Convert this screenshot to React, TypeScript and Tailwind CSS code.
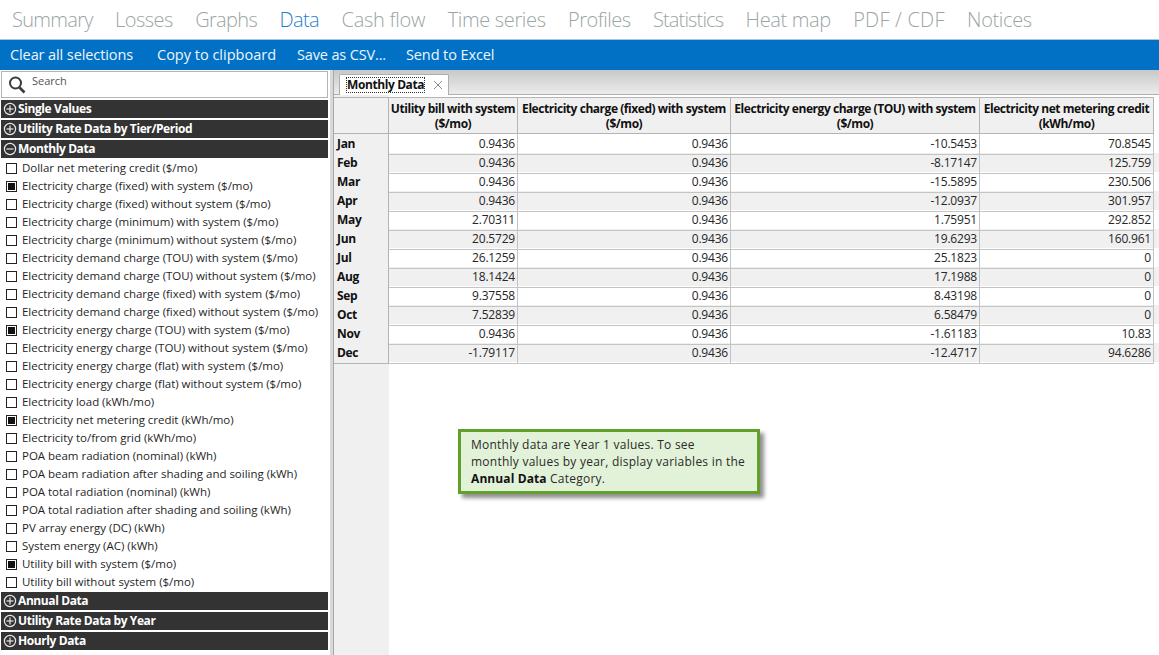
import React from "react";

const tabs: [string, string][] = [
  ["Summary", "tracking-[-0.7px]"],
  ["Losses", "tracking-[-0.55px]"],
  ["Graphs", "tracking-[-0.65px]"],
  ["Data", "tracking-[-0.6px] text-[#1f7fcb]"],
  ["Cash flow", "tracking-[-0.25px]"],
  ["Time series", "tracking-[-0.35px]"],
  ["Profiles", "tracking-[-0.5px]"],
  ["Statistics", "tracking-[-0.85px]"],
  ["Heat map", "tracking-[-0.35px]"],
  ["PDF / CDF", "tracking-[0.2px]"],
  ["Notices", "tracking-[-0.35px]"],
];
const items: [string, boolean][] = [
  ["Dollar net metering credit ($/mo)", false],
  ["Electricity charge (fixed) with system ($/mo)", true],
  ["Electricity charge (fixed) without system ($/mo)", false],
  ["Electricity charge (minimum) with system ($/mo)", false],
  ["Electricity charge (minimum) without system ($/mo)", false],
  ["Electricity demand charge (TOU) with system ($/mo)", false],
  ["Electricity demand charge (TOU) without system ($/mo)", false],
  ["Electricity demand charge (fixed) with system ($/mo)", false],
  ["Electricity demand charge (fixed) without system ($/mo)", false],
  ["Electricity energy charge (TOU) with system ($/mo)", true],
  ["Electricity energy charge (TOU) without system ($/mo)", false],
  ["Electricity energy charge (flat) with system ($/mo)", false],
  ["Electricity energy charge (flat) without system ($/mo)", false],
  ["Electricity load (kWh/mo)", false],
  ["Electricity net metering credit (kWh/mo)", true],
  ["Electricity to/from grid (kWh/mo)", false],
  ["POA beam radiation (nominal) (kWh)", false],
  ["POA beam radiation after shading and soiling (kWh)", false],
  ["POA total radiation (nominal) (kWh)", false],
  ["POA total radiation after shading and soiling (kWh)", false],
  ["PV array energy (DC) (kWh)", false],
  ["System energy (AC) (kWh)", false],
  ["Utility bill with system ($/mo)", true],
  ["Utility bill without system ($/mo)", false],
];
const rows: string[][] = [
  ["Jan", "0.9436", "0.9436", "-10.5453", "70.8545"],
  ["Feb", "0.9436", "0.9436", "-8.17147", "125.759"],
  ["Mar", "0.9436", "0.9436", "-15.5895", "230.506"],
  ["Apr", "0.9436", "0.9436", "-12.0937", "301.957"],
  ["May", "2.70311", "0.9436", "1.75951", "292.852"],
  ["Jun", "20.5729", "0.9436", "19.6293", "160.961"],
  ["Jul", "26.1259", "0.9436", "25.1823", "0"],
  ["Aug", "18.1424", "0.9436", "17.1988", "0"],
  ["Sep", "9.37558", "0.9436", "8.43198", "0"],
  ["Oct", "7.52839", "0.9436", "6.58479", "0"],
  ["Nov", "0.9436", "0.9436", "-1.61183", "10.83"],
  ["Dec", "-1.79117", "0.9436", "-12.4717", "94.6286"],
];
const heads: [string, string][] = [
  ["Utility bill with system", "($/mo)"],
  ["Electricity charge (fixed) with system", "($/mo)"],
  ["Electricity energy charge (TOU) with system", "($/mo)"],
  ["Electricity net metering credit", "(kWh/mo)"],
];

function Sign({ minus }: { minus?: boolean }) {
  return (
    <svg width="14" height="14" viewBox="0 0 14 14" className="shrink-0" fill="none" stroke="#e8e8e8" strokeWidth="1.2">
      <circle cx="7" cy="7" r="5.6" />
      <path d="M3.5 7h7" />
      {!minus && <path d="M7 3.5v7" />}
    </svg>
  );
}

function Header({ label, minus }: { label: string; minus?: boolean }) {
  return (
    <div className="h-[18px] mb-[2px] mx-[1px] w-[327px] bg-[#333333] flex items-center pl-[2px] gap-[1px] text-white font-bold text-[12px] leading-[18px] tracking-[-0.4px]">
      <Sign minus={minus} />
      <span>{label}</span>
    </div>
  );
}

const columns = "grid grid-cols-[55px_129px_213px_249px_174px]";

export default function App() {
  return (
    <div className="w-[1159px] h-[655px] overflow-hidden bg-white flex flex-col font-['Open_Sans',sans-serif] text-[#222]">
      <div className="h-[40px] shrink-0 flex items-center pl-[12px] gap-[22.4px] text-[20px] font-light text-[#9aa5a5] border-b border-[#a9c4dc]">
        {tabs.map(([t, c]) => (
          <span key={t} className={c}>{t}</span>
        ))}
      </div>
      <div className="h-[30px] shrink-0 bg-[#0071c5] flex items-center pl-[10px] text-[14.5px] text-[#eef6fc] tracking-[-0.1px]">
        <span className="mr-[24px]">Clear all selections</span>
        <span className="mr-[21px] tracking-[0px]">Copy to clipboard</span>
        <span className="mr-[20px] tracking-[-0.15px]">Save as CSV...</span>
        <span>Send to Excel</span>
      </div>
      <div className="flex-1 flex min-h-0">
        <div className="w-[330px] shrink-0 flex flex-col pt-[1px]">
          <div className="h-[27px] mx-[1px] w-[327px] mb-[2px] border border-[#b4b4b4] flex items-start pl-[6px] pt-[1px] gap-[6px] text-[11px] text-[#555]">
            <svg width="18" height="20" viewBox="0 0 18 20" fill="none" stroke="#3c3c3c" strokeWidth="2" className="mt-[2px]">
              <circle cx="7.5" cy="8" r="5.5" />
              <path d="M11.5 12.5l5 5" strokeWidth="2.6" />
            </svg>
            <span className="leading-[16px]">Search</span>
          </div>
          <Header label="Single Values" />
          <Header label="Utility Rate Data by Tier/Period" />
          <Header label="Monthly Data" minus />
          <div className="-mt-[1px] mb-[1px]">
            {items.map(([label, on]) => (
              <div key={label} className="h-[18px] flex items-center pl-[6px] gap-[5px] text-[11.5px] text-[#1f1f1f] tracking-[-0.02px] whitespace-nowrap">
                <span className="w-[11px] h-[11px] border border-[#222] flex items-center justify-center shrink-0 bg-white">
                  {on && <span className="w-[7px] h-[7px] bg-[#111]" />}
                </span>
                <span>{label}</span>
              </div>
            ))}
          </div>
          <Header label="Annual Data" />
          <Header label="Utility Rate Data by Year" />
          <Header label="Hourly Data" />
        </div>
        <div className="w-[4px] shrink-0 bg-[#d9d9d9] border-r border-[#a8a8a8]" />
        <div className="flex-1 min-w-0 relative flex flex-col">
          <div className="h-[25px] shrink-0 bg-gradient-to-b from-[#c8c8c8] to-[#ececec] border-b border-[#b0b0b0] pl-[5px] pt-[4px] flex relative">
            <div className="w-[110px] h-[21px] bg-white border border-b-0 border-[#adadad] rounded-t-[2px] flex items-center pl-[7px] gap-[9px]">
              <span className="outline-1 outline-dotted outline-[#333] text-[12px] font-bold leading-[14px] text-[#111] tracking-[-0.4px] whitespace-nowrap">Monthly Data</span>
              <svg width="10" height="10" viewBox="0 0 10 10" stroke="#8a8a8a" strokeWidth="1" className="shrink-0">
                <path d="M1 1l8 8M9 1l-8 8" />
              </svg>
            </div>
          </div>
          <div className="flex-1 min-h-0 relative pt-[2px]">
            <div className="absolute left-0 top-0 bottom-0 w-[55px] bg-[#f0f0f0]" />
            <div className="relative">
              <div className={`${columns} h-[37px] text-[12px] leading-[15px] font-bold text-[#111] tracking-[-0.45px]`}>
                <div className="bg-[#f0f0f0] border border-l-0 border-[#b4b4b4]" />
                {heads.map(([a, b]) => (
                  <div key={a} className="bg-[#f0f0f0] border-t border-r border-b border-[#b4b4b4] text-center flex flex-col justify-center whitespace-nowrap overflow-hidden">
                    <span>{a}</span>
                    <span>{b}</span>
                  </div>
                ))}
              </div>
              {rows.map((r, i) => (
                <div key={r[0]} className={`${columns} h-[19px] text-[12px] leading-[20px] tracking-[-0.2px] ${i % 2 ? "bg-[#f0f0f0]" : "bg-white"}`}>
                  {r.map((c, j) => (
                    j === 0 ? (
                      <div key={j} className="bg-[#f0f0f0] border-r border-b border-[#b4b4b4] pl-[3px] font-bold text-[#111] tracking-[-0.3px]">{c}</div>
                    ) : (
                      <div key={j} className="border-r border-b border-[#c4c4c4] text-right pr-[2px] text-[#262626]">{c}</div>
                    )
                  ))}
                </div>
              ))}
            </div>
            <div className="absolute left-[124px] top-[334px] w-[302px] h-[65px] bg-[#e2f2d8] border-[3px] border-[#62a02a] shadow-[4px_4px_4px_#8f8f8f] pl-[10px] pt-[4px] text-[12px] leading-[17px] text-[#2a2a2a] tracking-[0.24px]">
              <div className="whitespace-nowrap">Monthly data are Year 1 values. To see</div>
              <div className="whitespace-nowrap">monthly values by year, display variables in the</div>
              <div><b className="text-[#111] tracking-[0.1px]">Annual Data</b> Category.</div>
            </div>
          </div>
        </div>
      </div>
    </div>
  );
}
